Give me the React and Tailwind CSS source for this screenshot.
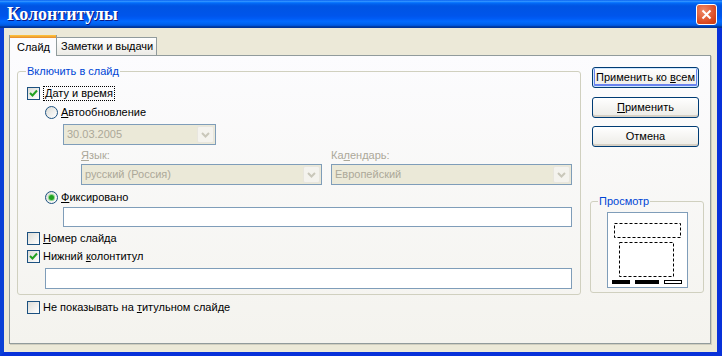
import React from 'react';

const Check = ({ checked }) => (
  <span className="flex h-[13px] w-[13px] shrink-0 items-center justify-center border border-[#1C5180] bg-linear-to-br from-[#DCDCD7] to-white">
    {checked && (
      <svg width="9" height="9" viewBox="0 0 9 9">
        <path d="M1 4 L3.5 6.5 L8 1.5" stroke="#21A121" strokeWidth="2" fill="none" />
      </svg>
    )}
  </span>
);

const Radio = ({ checked }) => (
  <span className="flex h-[13px] w-[13px] shrink-0 items-center justify-center rounded-full border border-[#1C5180] bg-linear-to-br from-[#DCDCD7] to-white">
    {checked && <span className="h-[5px] w-[5px] rounded-full bg-[#21A121] shadow-[0_0_0_1px_#8FD88F]" />}
  </span>
);

const Combo = ({ value, className }) => (
  <div className={`flex h-[21px] items-center border border-[#7F9DB9] bg-[#EBE9D8] ${className}`}>
    <span className="flex-1 pl-[3px] text-[#ACA899]">{value}</span>
    <span className="mr-[1px] flex h-[17px] w-[17px] items-center justify-center rounded-[2px] border border-[#E8E6DE] bg-[#F4F3EE]">
      <svg width="9" height="6" viewBox="0 0 9 6">
        <path d="M1 1 L4.5 4.5 L8 1" stroke="#C9C7BA" strokeWidth="2" fill="none" />
      </svg>
    </span>
  </div>
);

const Btn = ({ children, def }) => (
  <button
    className={`flex h-[21px] w-[107px] items-center justify-center rounded-[3px] border border-[#003C74] bg-linear-to-b from-white to-[#ECEBE6] text-black ${
      def ? 'shadow-[inset_0_0_0_1px_#CEE7FF,inset_0_-1px_0_2px_#6982EE]' : 'shadow-[inset_0_-2px_0_#D6D0C5]'
    }`}
  >
    <span>{children}</span>
  </button>
);

export default function App() {
  return (
    <div className="flex h-[356px] w-[722px] flex-col overflow-hidden font-['Liberation_Sans',Arial,sans-serif] text-[11px] leading-[13px] text-black">
      {/* title bar */}
      <div className="flex h-[28px] shrink-0 items-center justify-between bg-[linear-gradient(to_bottom,#0058EE_0%,#3593FF_4%,#288EFF_6%,#127DFF_8%,#036FFC_10%,#0262EE_14%,#0057E5_20%,#0054E3_24%,#0055EB_56%,#005BF5_66%,#026AFE_76%,#0062EF_86%,#0052D6_92%,#0040AB_94%,#003092_100%)] pl-[7px] pr-[5px]">
        <span className="font-['Liberation_Serif',serif] text-[18px] font-bold leading-[22px] text-white [text-shadow:1px_1px_0_#0A1883]">
          Колонтитулы
        </span>
        <span className="flex h-[21px] w-[21px] items-center justify-center rounded-[3px] border border-white bg-[radial-gradient(circle_at_35%_30%,#F08A68,#D9471E_70%,#C23A12)]">
          <svg width="11" height="11" viewBox="0 0 11 11">
            <path d="M1.5 1.5 L9.5 9.5 M9.5 1.5 L1.5 9.5" stroke="white" strokeWidth="2" />
          </svg>
        </span>
      </div>

      {/* body */}
      <div className="flex flex-1 flex-col border-r-[5px] border-b-[4px] border-l-[4px] border-r-[#0831D9] border-b-[#0831D9] border-l-[#0A40D6] bg-[#ECE9D8] pt-[7px] pr-[6px] pb-[8px] pl-[5px]">
        {/* tabs */}
        <div className="flex h-[20px] items-end">
          <div className="relative z-10 -mb-[1px] flex h-[21px] w-[48px] flex-col border-x border-[#919B9C] bg-[#FCFCFE]">
            <div className="h-[3px] bg-linear-to-b from-[#FFC83C] to-[#E68B2C]" />
            <div className="pt-[3px] pl-[7px]">Слайд</div>
          </div>
          <div className="flex h-[18px] w-[100px] items-center whitespace-nowrap border-t border-r border-[#919B9C] bg-linear-to-b from-white to-[#ECEBE6] pl-[4px]">
            Заметки и выдачи
          </div>
        </div>

        {/* panel */}
        <div className="flex h-[289px] border border-[#919B9C] bg-linear-to-b from-[#FCFCFE] to-[#F4F3EE] pt-[9px] pl-[7px] shadow-[1px_1px_0_#D0CEBF]">
          {/* left column */}
          <div className="flex w-[564px] flex-col">
            <fieldset className="rounded-[3px] border border-[#D0D0BF] pr-[8px] pb-[5px] pl-[9px]">
              <legend className="-ml-[1px] px-[1px] text-[#0046D5]">Включить в слайд</legend>
              <div className="mt-[8px] flex items-center gap-[3px]">
                <Check checked />
                <span className="border border-dotted border-black px-[1px]">
                  <u>Д</u>ату и время
                </span>
              </div>
              <div className="mt-[5px] ml-[18px] flex items-center gap-[3px]">
                <Radio />
                <span>
                  <u>А</u>втообновление
                </span>
              </div>
              <Combo value="30.03.2005" className="mt-[5px] ml-[36px] w-[153px]" />
              <div className="mt-[4px] ml-[54px] flex gap-[9px]">
                <div className="flex w-[241px] flex-col">
                  <span className="text-[#ACA899]">
                    <u>Я</u>зык:
                  </span>
                  <Combo value="русский (Россия)" className="mt-[2px]" />
                </div>
                <div className="flex w-[241px] flex-col">
                  <span className="text-[#ACA899]">
                    Ка<u>л</u>ендарь:
                  </span>
                  <Combo value="Европейский" className="mt-[2px]" />
                </div>
              </div>
              <div className="mt-[6px] ml-[18px] flex items-center gap-[3px]">
                <Radio checked />
                <span>
                  <u>Ф</u>иксировано
                </span>
              </div>
              <div className="mt-[3px] ml-[36px] h-[20px] w-[509px] border border-[#7F9DB9] bg-white" />
              <div className="mt-[5px] flex items-center gap-[3px]">
                <Check />
                <span>
                  <u>Н</u>омер слайда
                </span>
              </div>
              <div className="mt-[5px] flex items-center gap-[3px]">
                <Check checked />
                <span>
                  Нижний <u>к</u>олонтитул
                </span>
              </div>
              <div className="mt-[5px] ml-[18px] h-[21px] w-[527px] border border-[#7F9DB9] bg-white" />
            </fieldset>
            <div className="mt-[6px] ml-[10px] flex items-center gap-[3px]">
              <Check />
              <span>
                Не показывать на <u>т</u>итульном слайде
              </span>
            </div>
          </div>

          {/* right column */}
          <div className="ml-[9px] flex w-[114px] flex-col">
            <div className="mt-[2px] ml-[2px] flex flex-col">
              <Btn def>
                Применить ко <u>в</u>сем
              </Btn>
              <div className="mt-[9px]">
                <Btn>
                  <u>П</u>рименить
                </Btn>
              </div>
              <div className="mt-[8px]">
                <Btn>Отмена</Btn>
              </div>
            </div>
            <fieldset className="mt-[48px] rounded-[3px] border border-[#D0D0BF] pb-[4px]">
              <legend className="ml-[7px] px-[1px] text-[#0046D5]">Просмотр</legend>
              <div className="mx-auto mt-[4px] h-[76px] w-[81px] border border-[#7F9DB9] bg-white">
                <svg width="79" height="74" viewBox="0 0 79 74">
                  <rect x="6.5" y="10.5" width="66" height="14" fill="none" stroke="black" strokeDasharray="3 2" />
                  <rect x="11.5" y="29.5" width="54" height="34" fill="none" stroke="black" strokeDasharray="3 2" />
                  <rect x="4" y="67" width="18" height="4" fill="black" />
                  <rect x="27" y="67" width="24" height="4" fill="black" />
                  <rect x="56.5" y="67.5" width="17" height="3" fill="none" stroke="black" />
                </svg>
              </div>
            </fieldset>
          </div>
        </div>
      </div>
    </div>
  );
}
